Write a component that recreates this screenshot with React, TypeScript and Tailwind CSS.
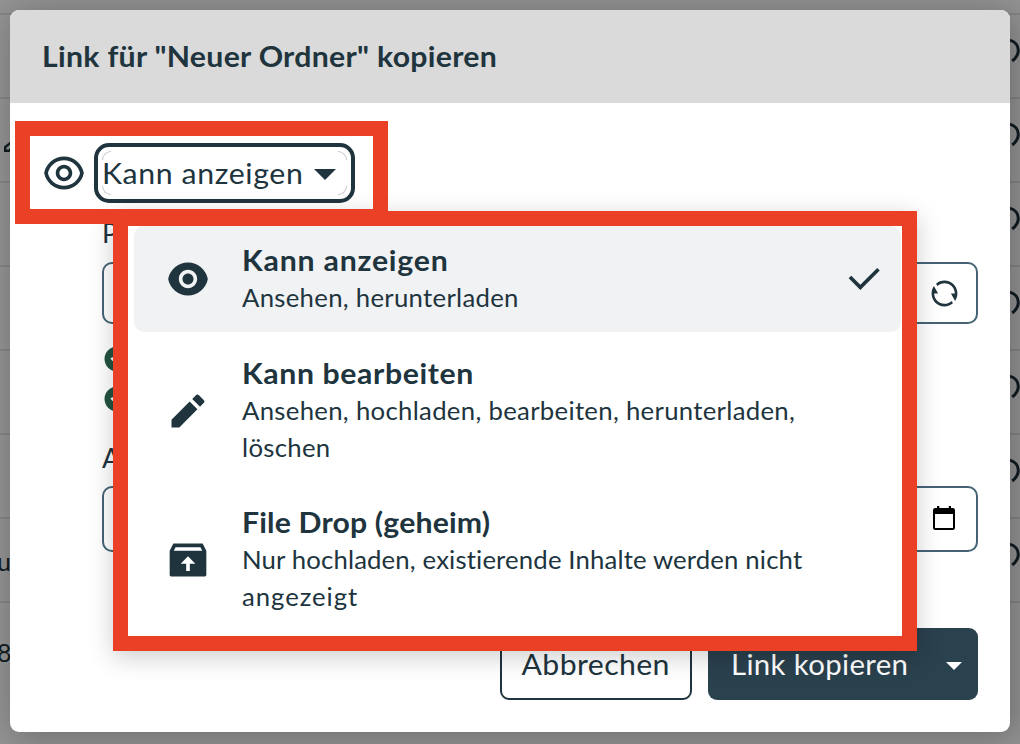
import React from "react";
import {
  RiCheckLine,
  RiCheckboxCircleFill,
  RiEyeFill,
  RiEyeLine,
  RiInboxUnarchiveFill,
  RiPencilFill,
  RiRefreshLine,
} from "react-icons/ri";

const fileRows = ["", "edit", "", "", "", "", "u", "8"];

function LinkArc() {
  return (
    <svg className="mb-[12px] h-[26px] w-[10px] shrink-0" viewBox="0 0 10 26" fill="none">
      <path d="M0 3.2C5 4.6 8.3 8.6 8.3 13.2C8.3 17.4 6 21 2.2 24" stroke="#101c22" strokeWidth="3" />
    </svg>
  );
}

function Caret({ className }: { className: string }) {
  return (
    <svg className={className} viewBox="0 0 22 11" preserveAspectRatio="none" fill="currentColor">
      <path d="M0 0H22L11 11Z" />
    </svg>
  );
}

function RowStart({ kind }: { kind: string }) {
  if (kind === "edit") {
    return (
      <svg className="mt-[9px] ml-[4px] size-[16px]" viewBox="0 0 16 16" fill="none" stroke="#101c22" strokeWidth="2.4">
        <path d="M14 0L1.2 10V13.8H5L16 3.5" />
      </svg>
    );
  }
  return <span className={kind === "8" ? "-ml-[3px] pt-[16px]" : "-ml-[3px] pt-[4px]"}>{kind}</span>;
}

function Background() {
  return (
    <div className="flex h-full flex-col">
      <div className="h-[15px] shrink-0 border-b-2 border-[#858585]" />
      {fileRows.map((kind, i) => (
        <div
          key={i}
          className="flex h-[84px] shrink-0 items-center justify-between border-b-2 border-[#858585] text-[25px] text-[#101c22] last:border-b-0"
        >
          <RowStart kind={kind} />
          {i < 7 ? <LinkArc /> : null}
        </div>
      ))}
    </div>
  );
}

interface OptionProps {
  icon: React.ReactNode;
  title: React.ReactNode;
  children: React.ReactNode;
  selected?: boolean;
}

function Option({ icon, title, children, selected }: OptionProps) {
  return (
    <div className={selected ? "flex items-center rounded-[10px] bg-[#f1f2f4] py-4 pl-8" : "flex items-center py-[15px] pl-8"}>
      <span className="w-[76px] shrink-0">{icon}</span>
      <div className="w-[600px] shrink-0 whitespace-nowrap">
        <div className="origin-left scale-x-108 text-[28px] leading-[37px] font-bold">{title}</div>
        <div className="origin-left scale-x-105 text-[24.5px] leading-[37px]">{children}</div>
      </div>
      {selected ? <RiCheckLine className="size-[44px]" /> : null}
    </div>
  );
}

export default function App() {
  return (
    <div className="relative h-[744px] w-[1020px] overflow-hidden bg-[#939393] font-['Lato',sans-serif] text-[#20343e]">
      <Background />

      <div className="absolute top-[10px] left-[10px] flex h-[722px] w-[1000px] flex-col overflow-hidden rounded-[9px] bg-white shadow-[4px_4px_34px_rgba(0,0,0,0.28)]">
        <header className="flex h-[93px] shrink-0 items-center bg-[#dadada] pb-[2px] pl-8 text-[28px] font-bold whitespace-nowrap">
          <span className="origin-left scale-x-108 tracking-[0.27px]">Link für "Neuer Ordner" kopieren</span>
        </header>

        <div className="flex h-[110px] shrink-0 items-start pt-10 pl-8">
          <RiEyeLine className="mt-[8px] mr-[8px] size-[44px]" />
          <div className="flex h-[60px] w-[261px] rounded-[15px] border-4 border-[#20343e] p-1">
            <div className="relative flex flex-1 items-center text-[28px]">
              <span className="absolute top-0 left-0 size-[9px] rounded-tl-[9px] border-t border-l border-[#c4c8ca]" />
              <span className="absolute top-0 right-0 size-[9px] rounded-tr-[9px] border-t border-r border-[#c4c8ca]" />
              <span className="absolute bottom-0 left-0 size-[9px] rounded-bl-[9px] border-b border-l border-[#c4c8ca]" />
              <span className="absolute right-0 bottom-0 size-[9px] rounded-br-[9px] border-r border-b border-[#c4c8ca]" />
              <span className="w-[212px] origin-left scale-x-108 tracking-[0.58px] whitespace-nowrap">Kann anzeigen</span>
              <Caret className="mt-[2px] h-[11px] w-[22px]" />
            </div>
          </div>
        </div>

        <div className="flex shrink-0 flex-col pr-8 pl-[92px]">
          <div className="h-[49px] text-[27px] leading-[40px]">Passwort</div>
          <div className="flex h-[62px] items-center justify-end rounded-[10px] border-2 border-[#446476] pr-[16px]">
            <RiRefreshLine className="size-[31px]" />
          </div>
          <div className="mt-[15px] flex h-[85px] flex-col text-[#235440]">
            <RiCheckboxCircleFill className="my-[5px] size-[30px]" />
            <RiCheckboxCircleFill className="my-[5px] size-[30px]" />
          </div>
          <div className="mt-[14px] h-[48px] text-[27px] leading-[40px]">Ablaufdatum</div>
          <div className="flex h-[66px] items-center justify-end rounded-[10px] border-2 border-[#446476] pr-[21px] text-black">
            <svg className="mb-[2px] h-[24px] w-[22px]" viewBox="0 0 22 24" fill="currentColor">
              <path
                fillRule="evenodd"
                d="M4 0H6.3V2H15.8V0H18V2H19.5A2.3 2.3 0 0 1 22 4.3V21.7A2.3 2.3 0 0 1 19.7 24H2.3A2.3 2.3 0 0 1 0 21.7V4.3A2.3 2.3 0 0 1 2.5 2H4ZM2 8V22H20V8Z"
              />
            </svg>
          </div>
        </div>

        <footer className="mt-auto mb-8 flex shrink-0 justify-end gap-4 pr-8 text-[28px] whitespace-nowrap">
          <div className="flex h-[72px] w-[192px] items-center justify-center rounded-[9px] border-2 border-[#20343e] pb-[1px]">
            <span className="scale-x-108 tracking-[0.37px]">Abbrechen</span>
          </div>
          <div className="flex h-[72px] w-[270px] items-center rounded-[9px] bg-[#2a414e] pb-[1px] pl-[23px] text-white">
            <span className="w-[215px] origin-left scale-x-105 tracking-[0.33px]">Link kopieren</span>
            <Caret className="mt-[4px] h-[8px] w-[16px]" />
          </div>
        </footer>
      </div>

      <div className="absolute top-[211px] left-[113px] h-[440px] w-[804px] border-[15px] border-[#ea4025] bg-white shadow-[0_6px_24px_rgba(0,0,0,0.2)]">
        <div className="flex flex-col gap-2 pr-[1px] pl-[6px]">
          <Option
            icon={<RiEyeFill className="size-[44px]" />}
            title={<span className="tracking-[0.74px]">Kann anzeigen</span>}
            selected
          >
            <span className="tracking-[0.28px]">Ansehen, herunterladen</span>
          </Option>
          <Option
            icon={<RiPencilFill className="size-[44px]" />}
            title={<span className="tracking-[0.57px]">Kann bearbeiten</span>}
          >
            <div className="tracking-[0.29px]">Ansehen, hochladen, bearbeiten, herunterladen,</div>
            <div className="tracking-[0.29px]">löschen</div>
          </Option>
          <Option
            icon={<RiInboxUnarchiveFill className="size-[44px]" />}
            title={<span className="tracking-[0.15px]">File Drop (geheim)</span>}
          >
            <div className="tracking-[0.14px]">Nur hochladen, existierende Inhalte werden nicht</div>
            <div className="tracking-[0.9px]">angezeigt</div>
          </Option>
        </div>
      </div>

      <div className="pointer-events-none absolute top-[121px] left-[15px] h-[103px] w-[373px] border-[15px] border-[#ea4025]" />
    </div>
  );
}
